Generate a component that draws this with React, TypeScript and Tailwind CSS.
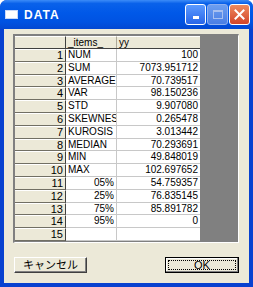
import React from "react";

const rows: [string, string, string][] = [
  ["1", "NUM", "100"],
  ["2", "SUM", "7073.951712"],
  ["3", "AVERAGE", "70.739517"],
  ["4", "VAR", "98.150236"],
  ["5", "STD", "9.907080"],
  ["6", "SKEWNESS", "0.265478"],
  ["7", "KUROSIS", "3.013442"],
  ["8", "MEDIAN", "70.293691"],
  ["9", "MIN", "49.848019"],
  ["10", "MAX", "102.697652"],
  ["11", "05%", "54.759357"],
  ["12", "25%", "76.835145"],
  ["13", "75%", "85.891782"],
  ["14", "95%", "0"],
  ["15", "", ""],
];

const font = { fontFamily: '"Liberation Sans", "Noto Sans CJK JP", sans-serif' };

export default function App() {
  return (
    <div
      className="w-[253px] h-[287px] flex flex-col bg-[#0841D0] rounded-t-[7px] overflow-hidden text-black"
      style={font}
    >
      {/* title bar */}
      <div className="h-[29px] shrink-0 flex items-center pl-[5px] pr-[3px] bg-[linear-gradient(180deg,#3C8CF8_0%,#0A62EA_12%,#0058E8_45%,#0053E2_75%,#0348D2_100%)]">
        <div className="w-[13px] h-[9px] bg-white border border-[#C8D8F8] mr-[6px]" />
        <span className="text-white font-bold text-[12px] tracking-[1px] flex-1">DATA</span>
        <div className="flex gap-[1px]">
          <div className="w-[21px] h-[21px] rounded-[3px] border border-white bg-[linear-gradient(180deg,#5C9BFF,#2865E8)] flex items-end justify-center pb-[5px]">
            <div className="w-[6px] h-[3px] bg-white" />
          </div>
          <div className="w-[21px] h-[21px] rounded-[3px] border border-[#8FB0F0] bg-[linear-gradient(180deg,#6C9EF0,#4A7EE4)] flex items-center justify-center">
            <div className="w-[10px] h-[9px] border border-[#A8C0F0] border-t-[2px]" />
          </div>
          <div className="w-[21px] h-[21px] rounded-[3px] border border-white bg-[linear-gradient(180deg,#EE8A5E,#D2452A)] flex items-center justify-center">
            <svg width="11" height="11" viewBox="0 0 11 11">
              <path d="M1.5 1.5 L9.5 9.5 M9.5 1.5 L1.5 9.5" stroke="white" strokeWidth="2" strokeLinecap="square" />
            </svg>
          </div>
        </div>
      </div>

      {/* client area */}
      <div className="flex-1 mx-[4px] mb-[4px] bg-[#ECE9D8] flex flex-col pt-[5px] pl-[9px] pr-[10px]">
        {/* grid */}
        <div className="h-[209px] w-[226px] border-t-2 border-l-2 border-t-[#808080] border-l-[#808080] border-b border-r border-b-white border-r-white flex bg-[#808080]">
          <div className="flex flex-col w-[185px] bg-white self-start">
            {/* header row */}
            <div className="h-[13px] flex text-[10px] leading-[12px] bg-[#ECE9D8] border-b border-[#404040]">
              <div className="w-[51px] border-r border-[#404040] border-t border-t-white" />
              <div className="w-[51px] pl-[2px] border-r border-[#ACA899] border-t border-t-white">_items_</div>
              <div className="flex-1 pl-[2px] border-t border-t-white">yy</div>
            </div>
            {rows.map(([n, k, v]) => (
              <div key={n} className="h-[12.8px] flex text-[10px] leading-[11px]">
                <div className="w-[51px] bg-[#ECE9D8] text-right pr-[2px] text-[11px] border-r border-[#404040] border-b border-b-[#716F64] border-t border-t-white overflow-hidden">
                  {n}
                </div>
                <div
                  className={`w-[51px] pl-[2px] pr-[2px] border-r border-b border-[#C8C8C8] overflow-hidden whitespace-nowrap ${
                    k.endsWith("%") ? "text-right" : ""
                  }`}
                >
                  {k}
                </div>
                <div className="flex-1 text-right pr-[2px] border-b border-[#C8C8C8] whitespace-nowrap">{v}</div>
              </div>
            ))}
          </div>
        </div>

        {/* buttons */}
        <div className="flex justify-between mt-[14px] pl-[1px]">
          <button className="w-[73px] h-[16px] text-[11px] leading-[12px] bg-[#ECE9D8] border border-t-white border-l-white border-r-[#404040] border-b-[#404040] shadow-[inset_-1px_-1px_0_#808080]">
            キャンセル
          </button>
          <button className="w-[74px] h-[16px] text-[11px] leading-[12px] bg-[#ECE9D8] border border-black p-[2px] shadow-[inset_-1px_-1px_0_#808080,inset_1px_1px_0_#ffffff]">
            <div className="w-full h-full border border-dotted border-black flex items-center justify-center">OK</div>
          </button>
        </div>
      </div>
    </div>
  );
}
